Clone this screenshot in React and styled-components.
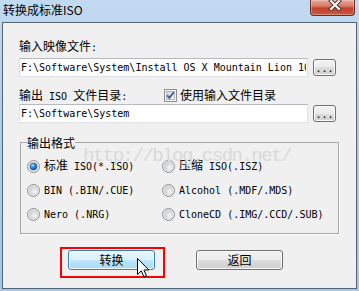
import React from 'react';
import styled, { createGlobalStyle } from 'styled-components';

const GlobalStyle = createGlobalStyle`
    body {
        margin: 0;
        background: #fff;
    }
`;

const Window = styled.div`
    width: 359px;
    height: 291px;
    box-sizing: border-box;
    display: flex;
    flex-direction: column;
    padding: 0 2px 2px;
    background: linear-gradient(180deg, #c2daf1 0%, #aecdec 40%, #a4c6e9 100%);
    font-family: "Noto Sans CJK SC", sans-serif;
    font-size: 12px;
    color: #000;
`;

const TitleBar = styled.div`
    height: 22px;
    display: flex;
    align-items: flex-start;
`;

const Title = styled.span`
    padding: 2px 0 0 1px;
    line-height: 16px;
`;

const CloseButton = styled.div`
    margin-left: auto;
    margin-right: 2px;
    width: 45px;
    height: 16px;
    box-sizing: border-box;
    position: relative;
    border: 1px solid #6a2b22;
    border-top: none;
    border-radius: 0 0 4px 4px;
    background: linear-gradient(180deg, #e9a898 0%, #d77b68 40%, #c2402c 55%, #c85a40 100%);
    box-shadow: inset 0 0 0 1px rgba(255, 230, 220, 0.35);
    display: flex;
    justify-content: center;
    padding-left: 4px;
`;

const Client = styled.div`
    flex: 1;
    position: relative;
    display: flex;
    flex-direction: column;
    align-items: flex-start;
    background: #f0f0f0;
    border: 1px solid #566371;
    padding: 16px 17px 0 16px;
`;

const Mono = styled.span`
    font-family: "DejaVu Sans Mono", monospace;
    font-size: 10px;
    white-space: pre;
`;

const Label = styled.div`
    line-height: 14px;
    height: 14px;
    white-space: nowrap;
    width: ${({ $width }) => ($width ? `${$width}px` : 'auto')};
    margin-top: ${({ $top }) => $top || 0}px;
`;

const Row = styled.div`
    display: flex;
    align-items: center;
    margin-top: ${({ $top }) => $top || 0}px;
`;

const PathField = styled.input`
    width: 289px;
    height: 19px;
    box-sizing: border-box;
    margin: 0;
    padding: 0 1px;
    border: 1px solid #dfe2e8;
    border-top-color: #b6b9c0;
    background: #fff;
    font-family: "DejaVu Sans Mono", monospace;
    font-size: 10px;
    color: #000;
    outline: none;
`;

const BrowseButton = styled.div`
    width: 23px;
    height: 17px;
    box-sizing: border-box;
    margin-left: 5px;
    border: 1px solid #707070;
    border-radius: 3px;
    background: linear-gradient(180deg, #f2f2f2 0%, #ebebeb 50%, #dddddd 50%, #cfcfcf 100%);
    box-shadow: inset 0 0 0 1px #fbfbfb;
    display: flex;
    justify-content: center;
    align-items: flex-end;
    font-family: "DejaVu Sans Mono", monospace;
    font-size: 10px;
    line-height: 13px;
`;

const CheckItem = styled.label`
    display: flex;
    align-items: center;
    gap: 3px;
    line-height: 14px;
`;

const Group = styled.fieldset`
    margin: 13px 0 0 1px;
    padding: 10px 0 12px 6px;
    width: 319px;
    box-sizing: border-box;
    min-width: 0;
    border: 1px solid #a8a8a8;
    box-shadow: 1px 1px 0 #fff;
`;

const Legend = styled.legend`
    padding: 0;
    margin: 0;
    line-height: 13px;
`;

const RadioGrid = styled.div`
    display: grid;
    grid-template-columns: 135px 1fr;
    row-gap: 10px;
`;

const RadioItem = styled.label`
    display: flex;
    align-items: center;
    gap: 4px;
    height: 14px;
    line-height: 14px;
    white-space: nowrap;
`;

const ButtonRow = styled.div`
    display: flex;
    gap: 41px;
    margin: 16px 0 0 49px;
`;

const ButtonSlot = styled.div`
    position: relative;
`;

const PushButton = styled.div`
    width: 87px;
    height: 20px;
    box-sizing: border-box;
    border: 1px solid ${({ $hot }) => ($hot ? '#3c7fb1' : '#707070')};
    border-radius: 3px;
    background: ${({ $hot }) => ($hot
        ? 'linear-gradient(180deg, #eaf6fd 0%, #d9f0fc 50%, #bee6fd 50%, #a7d9f5 100%)'
        : 'linear-gradient(180deg, #f2f2f2 0%, #ebebeb 50%, #dddddd 50%, #cfcfcf 100%)')};
    box-shadow: inset 0 0 0 1px ${({ $hot }) => ($hot ? '#f4fbff' : '#fbfbfb')};
    display: flex;
    justify-content: center;
    align-items: center;
    line-height: 14px;
`;

const Highlight = styled.div`
    position: absolute;
    left: -8px;
    top: -3px;
    width: 105px;
    height: 31px;
    box-sizing: border-box;
    border: 2px solid #ff0000;
    pointer-events: none;
`;

const Cursor = styled.svg`
    position: absolute;
    left: 69px;
    top: 8px;
    pointer-events: none;
`;

const Watermark = styled.div`
    position: absolute;
    left: 80px;
    top: 124px;
    font-family: "Liberation Mono", monospace;
    font-size: 19px;
    line-height: 19px;
    letter-spacing: -1.5px;
    color: #d9d9d9;
    pointer-events: none;
    white-space: nowrap;
`;

const CloseGlyph = () => (
    <svg width="14" height="11" viewBox="0 0 14 11">
        <path d="M3 1 L11 9 M11 1 L3 9" stroke="#4a3a3a" strokeWidth="4" strokeLinecap="square" fill="none" />
        <path d="M3 1 L11 9 M11 1 L3 9" stroke="#ffffff" strokeWidth="2" strokeLinecap="square" fill="none" />
    </svg>
);

const CheckBox = () => (
    <svg width="13" height="13" viewBox="0 0 13 13">
        <defs>
            <linearGradient id="cbIn" x1="0" y1="0" x2="1" y2="1">
                <stop offset="0" stopColor="#cdd3da" />
                <stop offset="1" stopColor="#f7f8f9" />
            </linearGradient>
        </defs>
        <rect x="0.5" y="0.5" width="12" height="12" fill="#f4f4f4" stroke="#8e8f8f" />
        <rect x="2.5" y="2.5" width="8" height="8" fill="url(#cbIn)" stroke="#b3b8bf" />
        <path d="M3.2 6.4 L5.4 8.8 L9.8 3.2" stroke="#3c5a99" strokeWidth="1.8" fill="none" />
    </svg>
);

const RadioMark = ({ on }) => (
    <svg width="13" height="13" viewBox="0 0 13 13">
        <defs>
            <radialGradient id="rdOut" cx="0.5" cy="0.5" r="0.5">
                <stop offset="0" stopColor="#ffffff" />
                <stop offset="1" stopColor="#e6e6e6" />
            </radialGradient>
            <radialGradient id="rdIn" cx="0.7" cy="0.7" r="0.8">
                <stop offset="0" stopColor="#fafafa" />
                <stop offset="1" stopColor="#c9cdd2" />
            </radialGradient>
            <radialGradient id="rdOn" cx="0.35" cy="0.3" r="0.75">
                <stop offset="0" stopColor="#9fe0ff" />
                <stop offset="0.5" stopColor="#2b8bd6" />
                <stop offset="1" stopColor="#0d4a8c" />
            </radialGradient>
        </defs>
        <circle cx="6.5" cy="6.5" r="6" fill="url(#rdOut)" stroke="#8e8f8f" />
        <circle cx="6.5" cy="6.5" r="4" fill="url(#rdIn)" stroke="#c2c6cb" strokeWidth="0.6" />
        {on && <circle cx="6.5" cy="6.5" r="3.4" fill="url(#rdOn)" stroke="#1b4f86" strokeWidth="0.6" />}
    </svg>
);

const formats = [
    { cjk: '标准', text: ' ISO(*.ISO)', on: true },
    { cjk: '压缩', text: ' ISO(.ISZ)' },
    { text: 'BIN (.BIN/.CUE)' },
    { text: 'Alcohol (.MDF/.MDS)' },
    { text: 'Nero (.NRG)' },
    { text: 'CloneCD (.IMG/.CCD/.SUB)' },
];

const App = () => (
    <>
        <GlobalStyle />
        <Window>
            <TitleBar>
                <Title>转换成标准ISO</Title>
                <CloseButton>
                    <CloseGlyph />
                </CloseButton>
            </TitleBar>
            <Client>
                <Label>输入映像文件<Mono>:</Mono></Label>
                <Row $top={5}>
                    <PathField readOnly value="F:\Software\System\Install OS X Mountain Lion 10.8.dmg" />
                    <BrowseButton>...</BrowseButton>
                </Row>
                <Row $top={11}>
                    <Label $width={145}>输出<Mono> ISO </Mono>文件目录<Mono>:</Mono></Label>
                    <CheckItem>
                        <CheckBox />
                        使用输入文件目录
                    </CheckItem>
                </Row>
                <Row $top={2}>
                    <PathField readOnly value="F:\Software\System" />
                    <BrowseButton>...</BrowseButton>
                </Row>
                <Group>
                    <Legend>输出格式</Legend>
                    <RadioGrid>
                        {formats.map((f) => (
                            <RadioItem key={f.text}>
                                <RadioMark on={f.on} />
                                <span>
                                    {f.cjk}
                                    <Mono>{f.text}</Mono>
                                </span>
                            </RadioItem>
                        ))}
                    </RadioGrid>
                </Group>
                <ButtonRow>
                    <ButtonSlot>
                        <PushButton $hot>转换</PushButton>
                        <Highlight />
                        <Cursor width="13" height="20" viewBox="0 0 13 20">
                            <path
                                d="M0.5 0.5 L0.5 16.5 L4.3 12.9 L6.9 18.8 L9.4 17.7 L6.9 12 L11.8 12 Z"
                                fill="#fff"
                                stroke="#000"
                                strokeWidth="1"
                                strokeLinejoin="miter"
                            />
                        </Cursor>
                    </ButtonSlot>
                    <ButtonSlot>
                        <PushButton>返回</PushButton>
                    </ButtonSlot>
                </ButtonRow>
                <Watermark>http://blog.csdn.net/</Watermark>
            </Client>
        </Window>
    </>
);

export default App;
